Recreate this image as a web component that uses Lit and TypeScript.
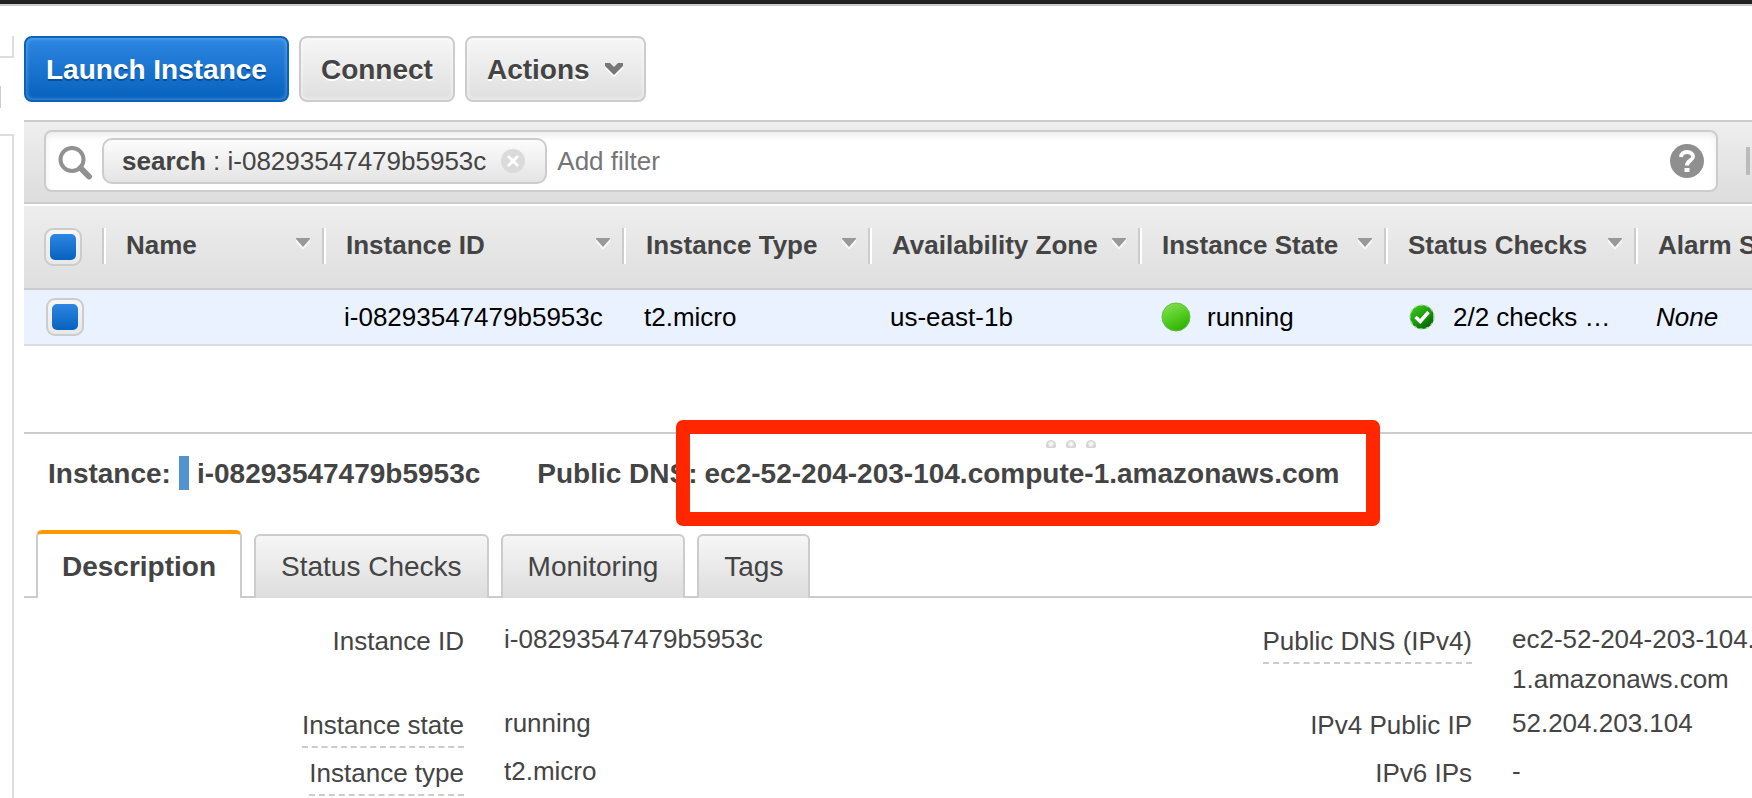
import { LitElement, html, css, svg } from "lit";
import { customElement, state } from "lit/decorators.js";
import { classMap } from "lit/directives/class-map.js";

const columns = [
  { id: "name", label: "Name" },
  { id: "id", label: "Instance ID" },
  { id: "type", label: "Instance Type" },
  { id: "zone", label: "Availability Zone" },
  { id: "state", label: "Instance State" },
  { id: "checks", label: "Status Checks" },
  { id: "alarm", label: "Alarm Status" },
];

const tabs = ["Description", "Status Checks", "Monitoring", "Tags"];

const details = [
  { label: "Instance ID", value: "i-08293547479b5953c", help: false },
  { label: "Public DNS (IPv4)", value: "ec2-52-204-203-104.compute-1.amazonaws.com", help: true },
  { label: "Instance state", value: "running", help: true },
  { label: "IPv4 Public IP", value: "52.204.203.104", help: false },
  { label: "Instance type", value: "t2.micro", help: true },
  { label: "IPv6 IPs", value: "-", help: false },
];

const searchIcon = svg`<svg class="search-icon" width="36" height="38" viewBox="0 0 36 38" aria-hidden="true">
  <circle cx="14" cy="17.500" r="11.500" fill="none" stroke="#919191" stroke-width="4"/>
  <path d="M22.500 26L31 34.500" stroke="#919191" stroke-width="6" stroke-linecap="round"/>
</svg>`;

const clearIcon = svg`<svg width="24" height="24" viewBox="0 0 24 24" aria-hidden="true">
  <circle cx="12" cy="12" r="12" fill="#dadada"/>
  <path d="M7 7L17 17M17 7L7 17" stroke="#fff" stroke-width="3"/>
</svg>`;

const helpIcon = svg`<svg width="34" height="34" viewBox="0 0 34 34" aria-hidden="true">
  <circle cx="17" cy="17" r="17" fill="#8f8f8f"/>
  <path d="M11 13C11.500 9.500 13.500 8 17 8C20.500 8 23 9.800 23 12.700C23 16.500 17 16.500 17 21.500" fill="none" stroke="#fff" stroke-width="4"/>
  <rect x="14.500" y="24" width="5" height="4" fill="#fff"/>
</svg>`;

const chevronIcon = svg`<svg width="20" height="14" viewBox="0 0 20 14" aria-hidden="true">
  <path d="M1 2H6L10 6L14 2H19V5L10 14L1 5Z" fill="#fff"/>
  <path d="M1 0H6L10 4L14 0H19V3L10 12L1 3Z" fill="#777"/>
</svg>`;

const sortIcon = svg`<svg class="sort" width="14" height="12" viewBox="0 0 14 12" aria-hidden="true">
  <path d="M0 2H14V4L7 12L0 4Z" fill="#f8f8f8"/>
  <path d="M0 0H14V1L7 9L0 1Z" fill="#999"/>
</svg>`;

const runningIcon = svg`<svg width="30" height="30" viewBox="0 0 30 30" aria-hidden="true">
  <defs><linearGradient id="run" x1="0.200" y1="0" x2="0.700" y2="1">
    <stop offset="0" stop-color="#86df52"/><stop offset="0.500" stop-color="#55cd24"/><stop offset="1" stop-color="#2eae00"/>
  </linearGradient></defs>
  <circle cx="15" cy="15" r="14" fill="url(#run)" stroke="#5fc138" stroke-width="1"/>
</svg>`;

const passedIcon = svg`<svg width="26" height="26" viewBox="0 0 26 26" aria-hidden="true">
  <defs><linearGradient id="ok" x1="0.100" y1="0" x2="0.900" y2="1">
    <stop offset="0" stop-color="#46c81e"/><stop offset="0.500" stop-color="#189c0c"/><stop offset="1" stop-color="#055503"/>
  </linearGradient></defs>
  <circle cx="13" cy="13" r="12" fill="url(#ok)" stroke="#a9dba0" stroke-width="1.500" stroke-dasharray="3 3"/>
  <path d="M6.500 13L11.300 17.500L19.500 8" fill="none" stroke="#fff" stroke-width="3.500"/>
</svg>`;

@customElement("app-root")
export class AppRoot extends LitElement {
  @state() private activeTab = "Description";

  static styles = css`
    :host {
      display: flex;
      flex-direction: column;
      height: 100vh;
      overflow: hidden;
      background: #fff;
      color: #444;
      font: 26px/30px "Liberation Sans", Arial, Helvetica, sans-serif;
    }
    *, *::before, *::after { box-sizing: border-box; }
    button, input { font: inherit; color: inherit; margin: 0; }
    svg { display: block; flex: none; }
    .topbar { flex: none; height: 6px; background: #222; border-bottom: 2px solid #ccc; }
    .frame {
      flex: 1;
      min-height: 0;
      display: grid;
      grid-template-columns: 14px minmax(0, 1fr);
      column-gap: 10px;
    }
    .side { display: flex; flex-direction: column; padding-top: 30px; }
    .side-top { height: 22px; border: solid #ddd; border-width: 0 2px 2px 0; }
    .side-handle { width: 1px; height: 22px; margin: 28px 0 26px; background: #ccc; }
    .side-body { flex: 1; border: solid #ddd; border-width: 2px 2px 0 0; }

    .actions { display: flex; gap: 10px; padding: 30px 0 18px; }
    .btn {
      display: flex;
      align-items: center;
      gap: 14px;
      height: 66px;
      padding: 2px 20px 0;
      border: 2px solid #ccc;
      border-radius: 8px;
      background: linear-gradient(#f6f6f6, #dfdfdf);
      box-shadow: inset 0 0 4px rgba(255, 255, 255, 0.8);
      font-size: 28px;
      font-weight: bold;
      text-shadow: 0 2px 0 #fff;
    }
    .btn.primary {
      border-color: #0863bd;
      background: linear-gradient(#2d87e2, #0762bd);
      box-shadow: inset 0 0 4px rgba(255, 255, 255, 0.4);
      color: #fff;
      text-shadow: 0 2px 0 #0a4f9a;
    }

    .filter {
      display: flex;
      align-items: flex-start;
      gap: 28px;
      height: 84px;
      padding: 8px 0 0 20px;
      border: solid #ccc;
      border-width: 2px 0;
      background: linear-gradient(#eee, #ddd);
    }
    .searchbox {
      flex: 1;
      min-width: 0;
      display: flex;
      align-items: center;
      height: 62px;
      padding: 0 12px;
      border: 2px solid #ccc;
      border-radius: 8px;
      background: #fff;
      box-shadow: inset 0 4px 6px #eee;
    }
    .search-icon { margin-right: 8px; }
    .chip {
      flex: none;
      display: flex;
      align-items: center;
      gap: 15px;
      height: 46px;
      padding: 0 20px 0 18px;
      border: 2px solid #ccc;
      border-radius: 10px;
      background: linear-gradient(#fcfcfc, #e4e4e4);
      white-space: pre;
    }
    .icon-btn { padding: 0; border: 0; background: none; }
    .searchbox input {
      flex: 1;
      min-width: 0;
      height: 40px;
      padding: 0 10px;
      border: 0;
      outline: 0;
      background: none;
    }
    .searchbox input::placeholder { color: #757575; opacity: 1; }
    .pager {
      flex: none;
      width: 6px;
      height: 28px;
      margin-top: 17px;
      padding: 0;
      border: 0;
      border-left: 4px solid #bbb;
      background: none;
    }

    table {
      width: 100%;
      margin-top: 2px;
      table-layout: fixed;
      border-collapse: collapse;
      white-space: nowrap;
    }
    .col-check { width: 78px; }
    .col-name { width: 220px; }
    .col-id { width: 300px; }
    .col-type, .col-state { width: 246px; }
    .col-zone { width: 270px; }
    .col-checks { width: 250px; }
    th, td { padding: 0; text-align: left; }
    thead tr { height: 84px; background: linear-gradient(#eee, #dedede); box-shadow: inset 0 -2px #ccc; }
    tbody tr { height: 56px; background: #eaf2ff; box-shadow: inset 0 -2px #ddd; color: #000; }
    td { padding-bottom: 2px; }
    th { padding-bottom: 2px; }
    .head {
      display: flex;
      align-items: center;
      justify-content: space-between;
      height: 36px;
      padding: 0 12px 2px 22px;
      border-left: 2px solid #ccc;
      box-shadow: inset 2px 0 #fff;
      margin-bottom: 2px;
    }
    .head .sort { margin-bottom: 2px; }
    .head-check { padding-left: 20px; }
    .row-check { padding-left: 22px; }
    .cell { display: flex; align-items: center; padding-left: 22px; }
    .state { gap: 16px; padding-left: 23px; }
    .checks { gap: 18px; padding-left: 25px; }
    .tick {
      appearance: none;
      display: block;
      width: 38px;
      height: 38px;
      padding: 4px;
      border: 2px solid #ccc;
      border-radius: 9px;
      background: linear-gradient(#f6f6f6, #e8e8e8);
    }
    .tick:checked::before {
      content: "";
      display: block;
      width: 26px;
      height: 26px;
      border-radius: 5px;
      background: linear-gradient(#2d87e2, #0762bd);
    }

    .panel { margin-top: 86px; border-top: 2px solid #ccc; }
    .grip { display: flex; justify-content: center; gap: 10px; height: 22px; padding: 6px 0 8px 366px; }
    .grip i { width: 10px; height: 8px; border-radius: 5px 5px 2px 2px; background: radial-gradient(circle at 50% 50%, #fff 5%, #d4d4d4 60%); }
    .summary {
      display: flex;
      align-items: center;
      height: 34px;
      padding-left: 24px;
      margin-bottom: 40px;
      font-size: 28px;
      line-height: 34px;
      font-weight: bold;
      white-space: nowrap;
    }
    .summary > span { padding-top: 2px; }
    .swatch { width: 10px; height: 34px; margin: 0 8px; background: #5294d2; }
    .dns-label { margin: 0 7px 0 57px; }
    .dns { position: relative; }
    .callout {
      position: absolute;
      inset: -35px -40px -35px -29px;
      border: 14px solid #ff2600;
      border-radius: 7px;
      pointer-events: none;
    }

    .tabs {
      display: flex;
      align-items: flex-end;
      gap: 12px;
      height: 68px;
      padding-left: 12px;
      background: linear-gradient(#ccc, #ccc) bottom / 100% 2px no-repeat;
    }
    .tab {
      height: 64px;
      padding: 0 25px;
      border: 2px solid #ccc;
      border-bottom: 0;
      border-radius: 6px 6px 0 0;
      background: linear-gradient(#f6f6f6, #ddd);
      font-size: 28px;
    }
    .tab.active {
      height: 68px;
      padding: 2px 24px 0;
      border-top: 4px solid #f90;
      background: #fff;
      font-weight: bold;
    }

    dl {
      display: grid;
      grid-template-columns: repeat(2, 440px minmax(0, 1fr));
      column-gap: 40px;
      min-width: 1976px;
      margin: 0;
      padding-top: 21px;
    }
    dt { padding: 7px 0 3px; text-align: right; }
    dt span { display: inline-block; padding-bottom: 6px; border-bottom: 2px solid transparent; vertical-align: top; }
    dt .help { border-bottom: 2px dashed #ccc; }
    dd { margin: 0; padding-bottom: 4px; line-height: 40px; }
  `;

  render() {
    return html`
      <div class="topbar"></div>
      <div class="frame">
        <aside class="side">
          <div class="side-top"></div>
          <div class="side-handle"></div>
          <div class="side-body"></div>
        </aside>
        <main>
          <div class="actions">
            <button class="btn primary">Launch Instance</button>
            <button class="btn">Connect</button>
            <button class="btn">Actions ${chevronIcon}</button>
          </div>

          <div class="filter">
            <div class="searchbox">
              ${searchIcon}
              <div class="chip"><span><b>search</b> : i-08293547479b5953c</span><button class="icon-btn" aria-label="Remove filter">${clearIcon}</button></div>
              <input type="text" placeholder="Add filter" aria-label="Add filter" />
              <button class="icon-btn" aria-label="Help">${helpIcon}</button>
            </div>
            <button class="pager" aria-label="First page"></button>
          </div>

          <table>
            <colgroup>
              <col class="col-check" />
              ${columns.map((c) => html`<col class="col-${c.id}" />`)}
            </colgroup>
            <thead>
              <tr>
                <th class="head-check"><input class="tick" type="checkbox" aria-label="Select all instances" checked /></th>
                ${columns.map((c) => html`<th scope="col"><div class="head"><span>${c.label}</span>${sortIcon}</div></th>`)}
              </tr>
            </thead>
            <tbody>
              <tr>
                <td class="row-check"><input class="tick" type="checkbox" aria-label="Select i-08293547479b5953c" checked /></td>
                <td></td>
                <td><div class="cell">i-08293547479b5953c</div></td>
                <td><div class="cell">t2.micro</div></td>
                <td><div class="cell">us-east-1b</div></td>
                <td><div class="cell state">${runningIcon} running</div></td>
                <td><div class="cell checks">${passedIcon} 2/2 checks …</div></td>
                <td><div class="cell"><i>None</i></div></td>
              </tr>
            </tbody>
          </table>

          <section class="panel">
            <div class="grip"><i></i><i></i><i></i></div>
            <div class="summary">
              <span>Instance:</span><span class="swatch"></span><span>i-08293547479b5953c</span>
              <span class="dns-label">Public DNS:</span>
              <span class="dns">ec2-52-204-203-104.compute-1.amazonaws.com<span class="callout"></span></span>
            </div>
            <div class="tabs" role="tablist">
              ${tabs.map(
                (t) => html`<button
                  role="tab"
                  class=${classMap({ tab: true, active: t === this.activeTab })}
                  aria-selected=${t === this.activeTab ? "true" : "false"}
                  @click=${() => (this.activeTab = t)}
                >${t}</button>`
              )}
            </div>
            <dl>
              ${details.map(
                (d) => html`<dt><span class=${classMap({ help: d.help })}>${d.label}</span></dt><dd>${d.value}</dd>`
              )}
            </dl>
          </section>
        </main>
      </div>
    `;
  }
}
